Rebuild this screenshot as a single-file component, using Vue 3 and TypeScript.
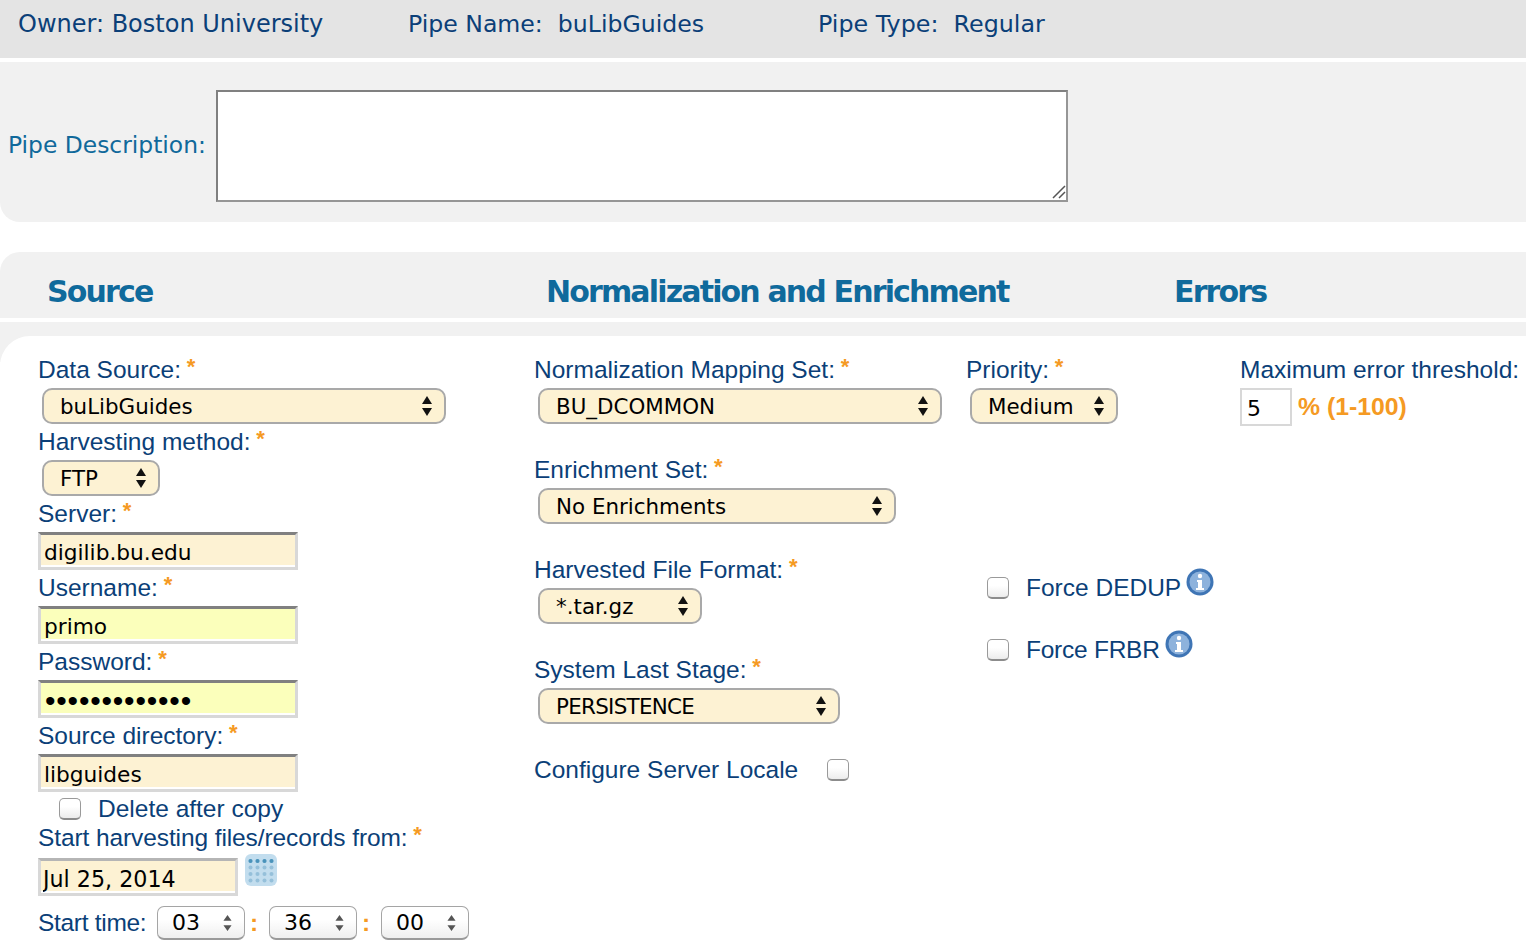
<script setup lang="ts">
const times = ['03', '36', '00']
</script>

<template>
  <div class="page">
    <header class="owner-bar">
      <span class="owner">Owner: Boston University</span>
      <span class="pipe-name">Pipe Name:&nbsp; buLibGuides</span>
      <span class="pipe-type">Pipe Type:&nbsp; Regular</span>
    </header>

    <section class="desc-panel">
      <label class="desc-label">Pipe Description:</label>
      <div class="desc-wrap">
        <textarea class="desc-input"></textarea>
        <svg class="grip" viewBox="0 0 14 14"><path d="M1 13L13 1M7 13l6-6" /></svg>
      </div>
    </section>

    <section class="heads">
      <h2 class="head-source">Source</h2>
      <h2 class="head-norm">Normalization and Enrichment</h2>
      <h2>Errors</h2>
    </section>

    <div class="content-wrap">
      <main class="content">
        <div class="col col-source">
          <div class="label">Data Source: <i>*</i></div>
          <div class="sel w-404"><span>buLibGuides</span><svg viewBox="0 0 10 20"><path d="M5 0l5 8H0zM5 20L0 12h10z" /></svg></div>
          <div class="label">Harvesting method: <i>*</i></div>
          <div class="sel w-118"><span>FTP</span><svg viewBox="0 0 10 20"><path d="M5 0l5 8H0zM5 20L0 12h10z" /></svg></div>
          <div class="label">Server: <i>*</i></div>
          <input class="field cream" value="digilib.bu.edu" />
          <div class="label">Username: <i>*</i></div>
          <input class="field yellow" value="primo" />
          <div class="label">Password: <i>*</i></div>
          <input class="field yellow pass" type="password" value="primo12345678" />
          <div class="label">Source directory: <i>*</i></div>
          <input class="field cream" value="libguides" />
          <div class="check-row delete-row">
            <span class="check"></span>
            <span>Delete after copy</span>
          </div>
          <div class="label start-label">Start harvesting files/records from: <i>*</i></div>
          <div class="date-row">
            <input class="field cream date" value="Jul 25, 2014" />
            <svg class="cal" viewBox="0 0 34 34">
              <rect x="1" y="1" width="32" height="32" rx="6" fill="#c2ddee" />
              <g fill="#95c0da">
                <template v-for="r in 4" :key="r">
                  <circle v-for="c in 4" :key="c" :cx="6.500 + (c - 1) * 7" :cy="8 + (r - 1) * 6.5" r="2" />
                </template>
              </g>
              <g fill="#4a93bb">
                <circle v-for="c in 4" :key="c" :cx="6.500 + (c - 1) * 7" cy="8" r="2" />
              </g>
            </svg>
          </div>
          <div class="time-row">
            <span class="time-label">Start time:</span>
            <template v-for="(t, i) in times" :key="i">
              <div class="time-sel">
                <span>{{ t }}</span>
                <svg viewBox="0 0 10 18"><path d="M5 0l4.500 6.500h-9zM5 18L.5 11.500h9z" /></svg>
              </div>
              <b v-if="i < 2" class="colon">:</b>
            </template>
          </div>
        </div>

        <div class="col col-norm">
          <div class="label">Normalization Mapping Set: <i>*</i></div>
          <div class="sel w-404 gap"><span>BU_DCOMMON</span><svg viewBox="0 0 10 20"><path d="M5 0l5 8H0zM5 20L0 12h10z" /></svg></div>
          <div class="label">Enrichment Set: <i>*</i></div>
          <div class="sel w-358 gap"><span>No Enrichments</span><svg viewBox="0 0 10 20"><path d="M5 0l5 8H0zM5 20L0 12h10z" /></svg></div>
          <div class="label">Harvested File Format: <i>*</i></div>
          <div class="sel w-164 gap"><span>*.tar.gz</span><svg viewBox="0 0 10 20"><path d="M5 0l5 8H0zM5 20L0 12h10z" /></svg></div>
          <div class="label">System Last Stage: <i>*</i></div>
          <div class="sel w-302 gap"><span class="tight">PERSISTENCE</span><svg viewBox="0 0 10 20"><path d="M5 0l5 8H0zM5 20L0 12h10z" /></svg></div>
          <div class="locale-row">
            <span>Configure Server Locale</span>
            <span class="check"></span>
          </div>
        </div>

        <div class="col col-force">
          <div class="label">Priority: <i>*</i></div>
          <div class="sel w-148"><span>Medium</span><svg viewBox="0 0 10 20"><path d="M5 0l5 8H0zM5 20L0 12h10z" /></svg></div>
          <div class="check-row force first">
            <span class="check"></span>
            <span>Force DEDUP</span>
            <svg class="info" viewBox="0 0 28 28">
              <circle cx="14" cy="14" r="13.500" fill="#3f75b5" />
              <circle cx="14" cy="14" r="10.500" fill="#8db2dc" />
              <circle cx="14" cy="8" r="2.200" fill="#fff" />
              <path d="M11 12h5v8h2v2h-8v-2h2v-6h-1z" fill="#fff" />
            </svg>
          </div>
          <div class="check-row force frbr">
            <span class="check"></span>
            <span>Force FRBR</span>
            <svg class="info" viewBox="0 0 28 28">
              <circle cx="14" cy="14" r="13.500" fill="#3f75b5" />
              <circle cx="14" cy="14" r="10.500" fill="#8db2dc" />
              <circle cx="14" cy="8" r="2.200" fill="#fff" />
              <path d="M11 12h5v8h2v2h-8v-2h2v-6h-1z" fill="#fff" />
            </svg>
          </div>
        </div>

        <div class="col col-errors">
          <div class="label">Maximum error threshold:</div>
          <div class="threshold">
            <input class="threshold-input" value="5" />
            <b>% (1-100)</b>
          </div>
        </div>
      </main>
    </div>
  </div>
</template>

<style scoped>
.page {
  height: 946px;
  overflow: hidden;
  background: #fff;
  font-family: "Liberation Sans", Arial, sans-serif;
}

.owner-bar {
  height: 58px;
  box-sizing: border-box;
  padding: 9px 0 0 18px;
  background: #e4e4e4;
  color: #0b3f78;
  font-family: "DejaVu Sans", Verdana, sans-serif;
  font-size: 24px;
  line-height: 30px;
  display: flex;
}

.owner {
  width: 390px;
}

.pipe-name {
  width: 410px;
  font-size: 23.6px;
}

.pipe-type {
  font-size: 23.8px;
}

.desc-panel {
  margin-top: 4px;
  height: 160px;
  background: #f1f1f1;
  border-bottom-left-radius: 20px;
  display: flex;
  align-items: center;
  padding-left: 8px;
}

.desc-label {
  width: 208px;
  color: #10699b;
  font-family: "DejaVu Sans", Verdana, sans-serif;
  font-size: 23.4px;
  margin-top: 6px;
}

.desc-wrap {
  position: relative;
  display: flex;
  margin-top: 8px;
}

.desc-input {
  width: 852px;
  height: 112px;
  box-sizing: border-box;
  resize: none;
  background: #fff;
  border: 2px solid #808080;
  border-bottom-color: #969696;
  border-right-color: #969696;
}

.grip {
  position: absolute;
  right: 2px;
  bottom: 3px;
  width: 14px;
  height: 14px;
  fill: none;
  stroke: #555;
  stroke-width: 1.5;
}

.heads {
  margin-top: 30px;
  height: 66px;
  box-sizing: border-box;
  padding: 21px 0 0 47px;
  background: #f1f1f1;
  border-top-left-radius: 20px;
  display: flex;
}

.heads h2 {
  margin: 0;
  color: #0f6a9c;
  font-family: "DejaVu Sans", Verdana, sans-serif;
  font-size: 30px;
  line-height: 38px;
  font-weight: 700;
  letter-spacing: -1.85px;
}

.head-source {
  width: 499px;
}

.head-norm {
  width: 628px;
}

.content-wrap {
  margin-top: 4px;
  padding-top: 14px;
  background: linear-gradient(#f1f1f1 0 40px, #fff 40px);
}

.content {
  background: #fff;
  border-top-left-radius: 30px;
  padding: 16px 0 0 38px;
  display: flex;
  height: 600px;
}

.col {
  display: flex;
  flex-direction: column;
  align-items: flex-start;
}

.col-source {
  width: 496px;
}

.col-norm {
  width: 432px;
}

.col-force {
  width: 274px;
}

.label {
  color: #0b3f78;
  font-size: 24.5px;
  line-height: 32px;
  padding: 2px 0;
  white-space: nowrap;
}

.label i,
.colon,
.threshold b {
  color: #f59a23;
}

.label i {
  font-style: normal;
  font-weight: 700;
  font-size: 22px;
  line-height: 0;
  vertical-align: 4px;
  margin-left: -1px;
}

.sel {
  height: 36px;
  box-sizing: border-box;
  margin-left: 4px;
  padding: 0 12px 0 16px;
  border: 2px solid #a9a9a9;
  border-radius: 10px;
  background: #fdf2d3;
  color: #000;
  font-family: "DejaVu Sans", Verdana, sans-serif;
  font-size: 21.4px;
  display: flex;
  align-items: center;
  justify-content: space-between;
}

.sel svg {
  width: 10px;
  height: 20px;
  fill: #111;
}

.tight {
  letter-spacing: -0.7px;
}

.w-404 {
  width: 404px;
}

.w-358 {
  width: 358px;
}

.w-302 {
  width: 302px;
}

.w-164 {
  width: 164px;
}

.w-148 {
  width: 148px;
}

.w-118 {
  width: 118px;
}

.gap {
  margin-bottom: 28px;
}

.field {
  width: 260px;
  height: 38px;
  box-sizing: border-box;
  margin: 0;
  padding: 3px 0 0 3px;
  border: solid #d8d8d8;
  border-width: 3px;
  border-top-color: #808080;
  border-radius: 0;
  box-shadow: inset 0 -2px 0 #fff;
  font-family: "DejaVu Sans", Verdana, sans-serif;
  font-size: 21.7px;
  color: #000;
  outline: none;
}

.cream {
  background: #fdf2d3;
}

.yellow {
  background: #fbffbb;
}

.pass {
  padding-left: 4px;
  font-family: "Liberation Sans", Arial, sans-serif;
  font-size: 30px;
  letter-spacing: 0.8px;
}

.check-row {
  display: flex;
  align-items: center;
  color: #0b3f78;
  font-size: 24.5px;
  line-height: 28px;
}

.delete-row {
  margin: 2px 0 0 21px;
  height: 30px;
  gap: 17px;
}

.check {
  display: inline-block;
  width: 22px;
  height: 22px;
  box-sizing: border-box;
  border: 1px solid #9a9a9a;
  border-bottom: 2px solid #8c8c8c;
  border-radius: 5px;
  background: linear-gradient(#fff 40%, #ececec);
}

.start-label {
  line-height: 28px;
  padding: 0 0 6px;
  letter-spacing: -0.1px;
}

.date-row {
  display: flex;
  align-items: flex-start;
  gap: 6px;
}

.date {
  width: 200px;
  padding-left: 2px;
  font-size: 22.2px;
  border-top: 3px solid #b5b5b5;
}

.cal {
  width: 34px;
  height: 34px;
  margin-top: -5px;
}

.time-row {
  display: flex;
  align-items: center;
  margin-top: 10px;
  color: #0b3f78;
  font-size: 24.5px;
}

.time-label {
  width: 119px;
  letter-spacing: -0.3px;
}

.time-sel {
  width: 88px;
  height: 34px;
  box-sizing: border-box;
  padding: 0 12px 0 14px;
  border: 1px solid #a5a5a5;
  border-bottom: 2px solid #9a9a9a;
  border-radius: 7px;
  background: linear-gradient(#fff 40%, #efefef);
  color: #000;
  font-family: "DejaVu Sans", Verdana, sans-serif;
  font-size: 22px;
  display: flex;
  align-items: center;
  justify-content: space-between;
}

.time-sel svg {
  width: 9px;
  height: 18px;
  fill: #555;
}

.colon {
  width: 24px;
  box-sizing: border-box;
  padding-right: 6px;
  text-align: center;
}

.locale-row {
  display: flex;
  align-items: center;
  gap: 28px;
  margin-top: 2px;
  color: #0b3f78;
  font-size: 24.5px;
  line-height: 32px;
}

.locale-row .check {
  margin-left: 1px;
}

.force {
  margin: 0 0 0 21px;
  gap: 17px;
}

.force.first {
  margin-top: 150px;
  margin-bottom: 34px;
}

.frbr {
  letter-spacing: -0.25px;
}

.force span + span {
  margin-right: -11px;
}

.info {
  width: 28px;
  height: 28px;
  margin: -12px 0 0 -1px;
}

.threshold {
  display: flex;
  align-items: center;
  gap: 6px;
}

.threshold-input {
  width: 52px;
  height: 38px;
  box-sizing: border-box;
  padding: 2px 0 0 5px;
  border: 2px solid #d8d8d8;
  background: #fff;
  color: #000;
  font-family: "DejaVu Sans", Verdana, sans-serif;
  font-size: 22px;
  outline: none;
}

.threshold b {
  font-size: 24.8px;
}
</style>

<style>
html,
body {
  margin: 0;
  overflow: hidden;
}
</style>
